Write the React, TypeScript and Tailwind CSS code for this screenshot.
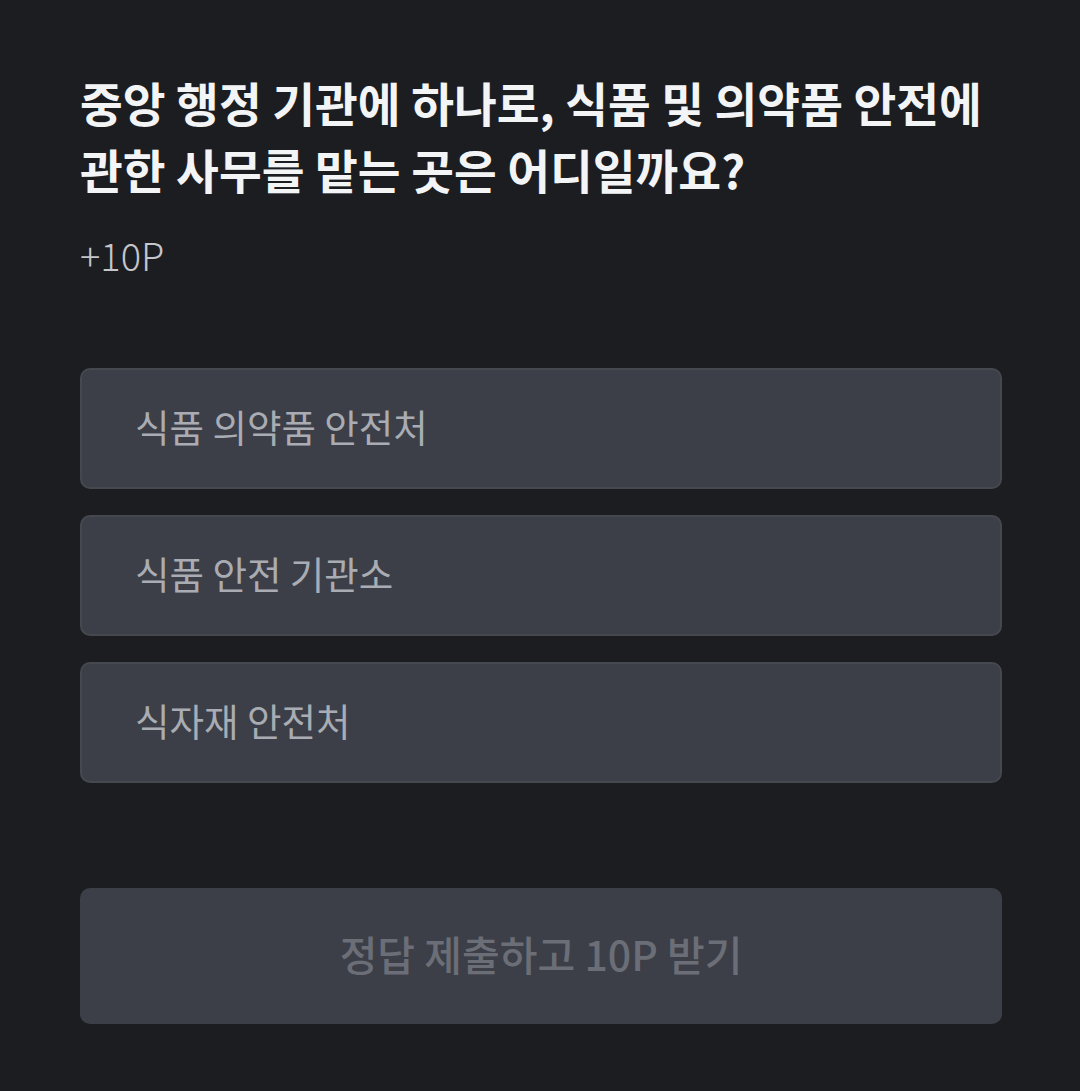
import React, { useState } from 'react';

const options = ['식품 의약품 안전처', '식품 안전 기관소', '식자재 안전처'];

const App: React.FC = () => {
  const [selected, setSelected] = useState<number | null>(null);

  return (
    <div
      className="min-h-[1091px] w-full bg-[#1c1d21] px-[80px] pt-[68px]"
      style={{ fontFamily: '"Noto Sans CJK KR", "Noto Sans", sans-serif' }}
    >
      {/* 문제 */}
      <h1 className="whitespace-nowrap text-[46.5px] font-bold leading-[67px] text-[#f3f4f6]">
        중앙 행정 기관에 하나로, 식품 및 의약품 안전에
        <br />
        관한 사무를 맡는 곳은 어디일까요?
      </h1>
      <p className="mt-[26px] text-[38px] font-light leading-[54px] text-[#c4c6cc]">+10P</p>

      {/* 보기 */}
      <div className="mt-[86px] flex w-[922px] flex-col gap-[26px]">
        {options.map((opt, i) => (
          <button
            key={opt}
            type="button"
            onClick={() => setSelected(i)}
            className={`flex h-[121px] items-center rounded-[10px] border-2 px-[53px] pb-[5px] text-left text-[37.5px] text-[#a9acb3] ${
              selected === i ? 'border-[#6b6e77] bg-[#3c3f47]' : 'border-[#45484f] bg-[#3c3f47]'
            }`}
          >
            {opt}
          </button>
        ))}
      </div>

      <button
        type="button"
        disabled={selected === null}
        className="mt-[105px] flex h-[136px] w-[922px] items-center justify-center rounded-[10px] bg-[#3c3f47] pb-[5px] text-[41px] font-medium text-[#6b6e77]"
      >
        정답 제출하고 10P 받기
      </button>
    </div>
  );
};

export default App;
